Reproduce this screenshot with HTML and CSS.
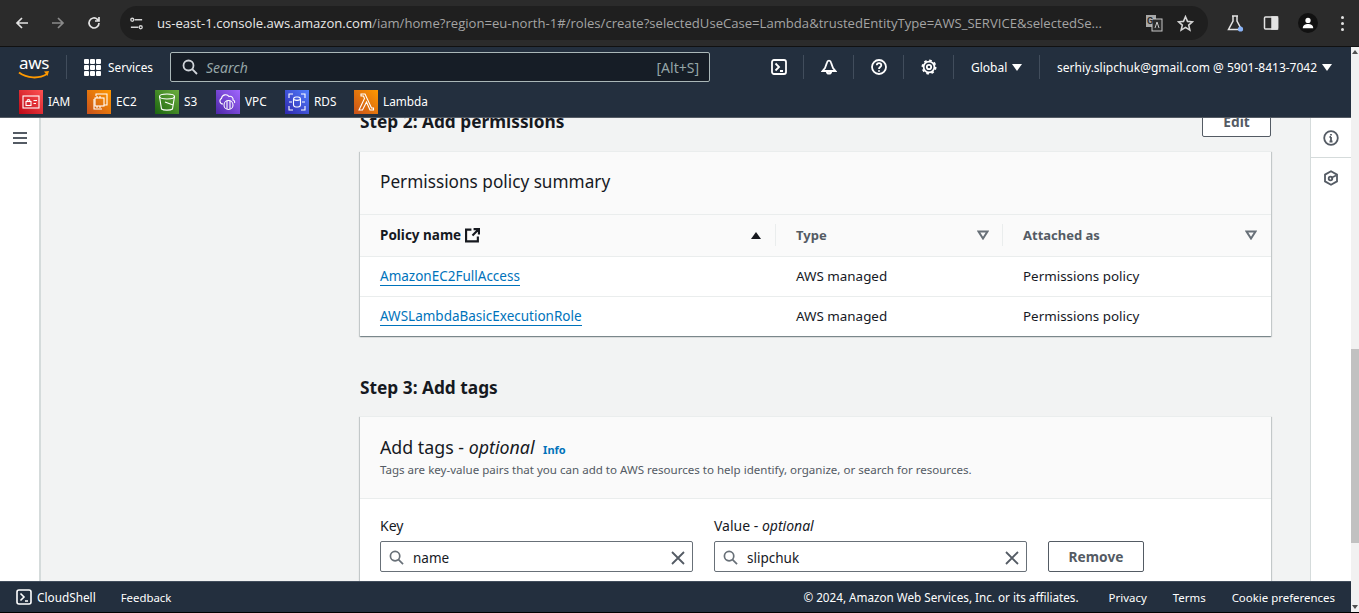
FILE: index.html
```html
<!DOCTYPE html>
<html lang="en">
<head>
    <meta charset="UTF-8">
    <meta name="viewport" content="width=device-width, initial-scale=1.0">
    <title>Create role - IAM</title>
    <link rel="stylesheet" href="styles.css">
</head>
<body>

<!-- Browser toolbar -->
<div class="browser-bar">
    <svg class="browser-icon back" viewBox="0 0 16 16"><path d="M14 8H3M8 3 3 8l5 5"/></svg>
    <svg class="browser-icon forward" viewBox="0 0 16 16"><path d="M2 8h11M8 3l5 5-5 5"/></svg>
    <svg class="browser-icon reload" viewBox="0 0 16 16"><path d="M13 8a5 5 0 1 1-1.6-3.7L13 6M13 2v4H9"/></svg>
    <div class="url-pill">
        <svg class="site-icon" viewBox="0 0 16 16"><path d="M6 4h8M2 12h8"/><circle cx="3.5" cy="4" r="1.6"/><circle cx="12.5" cy="12" r="1.6"/></svg>
        <div class="url-text"><span class="url-host">us-east-1.console.aws.amazon.com</span>/iam/home?region=eu-north-1#/roles/create?selectedUseCase=Lambda&amp;trustedEntityType=AWS_SERVICE&amp;selectedSe...</div>
        <svg class="translate-icon" viewBox="0 0 18 18"><rect x="1" y="1" width="10" height="12" fill="#a8a8a8"/><rect x="7" y="5" width="10" height="12" fill="#2b2b2b" stroke="#c7c7c7"/><text x="2" y="10" font-size="9" font-weight="700" fill="#2b2b2b">G</text><path d="M10 14l2-6 2 6" fill="none" stroke="#c7c7c7"/></svg>
        <svg class="star-icon" viewBox="0 0 16 16"><path d="M8 1.6 9.900 6l4.700.4-3.600 3.100 1.100 4.700L8 11.700l-4.100 2.500L5 9.500 1.400 6.400 6.100 6z"/></svg>
    </div>
    <svg class="flask-icon" viewBox="0 0 18 18"><path d="M6 2h6M7 2v5L2.500 15.500h13L11 7V2"/><circle cx="14.500" cy="15" r="2.600"/></svg>
    <svg class="panel-icon" viewBox="0 0 16 16"><rect x="1.500" y="2" width="13" height="12" rx="1"/><rect x="9" y="2" width="5.500" height="12"/></svg>
    <div class="avatar"><svg viewBox="0 0 16 16"><circle cx="8" cy="5" r="3"/><path d="M2 14c0-3.500 3-4.800 6-4.800s6 1.300 6 4.800z"/></svg></div>
    <div class="kebab"><i></i><i></i><i></i></div>
</div>

<div class="page-frame">
    <div class="page">
        <!-- Console header -->
        <header class="top-nav">
            <div class="nav-main">
                <div class="aws-logo">
                    <span class="aws-word">aws</span>
                    <svg viewBox="0 0 32 9"><path d="M1 1.500c8 6 20 6.500 28 1.500" fill="none" stroke="#f90" stroke-width="2"/><path d="M26 .5l5-.5-1.500 5z" fill="#f90"/></svg>
                </div>
                <div class="services-btn">
                    <div class="grid-icon"><i></i><i></i><i></i><i></i><i></i><i></i><i></i><i></i><i></i></div>
                    <span>Services</span>
                </div>
                <div class="search-box">
                    <svg viewBox="0 0 16 16"><circle cx="6.500" cy="6.500" r="5"/><path d="M10.200 10.200 15 15"/></svg>
                    <span class="search-text">Search</span>
                    <span class="search-key">[Alt+S]</span>
                </div>
                <div class="nav-icon first">
                    <svg viewBox="0 0 16 16"><rect x="1" y="1" width="14" height="14" rx="2"/><path d="M4.500 4.500 8 8l-3.500 3.500M9 12h3"/></svg>
                </div>
                <div class="nav-icon">
                    <svg viewBox="0 0 16 16"><path d="M6 3.500C6.500 1 9.500 1 10 3.500L12 9l2.500 3h-13L4 9z"/><path d="M5.800 12.500a2.200 2.200 0 0 0 4.400 0z"/></svg>
                </div>
                <div class="nav-icon">
                    <svg viewBox="0 0 16 16"><circle cx="8" cy="8" r="7"/><path d="M5.800 6.200C5.800 3.500 10.300 3.500 10.300 6.200 10.300 8 8 8 8 10"/><path d="M8 11.300v1.400"/></svg>
                </div>
                <div class="nav-icon">
                    <svg viewBox="0 0 16 16"><circle cx="8" cy="8" r="5.400"/><circle cx="8" cy="8" r="6.600" stroke-dasharray="2.600 2.580"/><circle cx="8" cy="8" r="2.200"/></svg>
                </div>
                <div class="nav-menu global">Global <b class="caret"></b></div>
                <div class="nav-menu account">serhiy.slipchuk@gmail.com @ 5901-8413-7042 <b class="caret"></b></div>
            </div>
            <div class="nav-shortcuts">
                <div class="shortcut sc-iam">
                    <span class="tile tile-red"><svg viewBox="0 0 24 24"><rect x="4" y="6" width="16" height="12"/><rect x="7" y="11.500" width="5" height="4"/><path d="M8 11.500c0-2.500 3-2.500 3 0M14.500 10.500H18M14.500 13.500H17"/></svg></span><span>IAM</span>
                </div>
                <div class="shortcut sc-ec2">
                    <span class="tile tile-orange"><svg viewBox="0 0 24 24"><path d="M9 6V4h11v11h-3M7 9v10h8"/><rect x="8" y="8" width="9" height="8"/><path d="M10 6v2M13 6v2M10 16v2M13 16v2"/></svg></span><span>EC2</span>
                </div>
                <div class="shortcut sc-s3">
                    <span class="tile tile-green"><svg viewBox="0 0 24 24"><ellipse cx="12" cy="6.500" rx="7.500" ry="2.500"/><path d="M4.500 6.500 6.500 19c2 1.500 9 1.500 11 0l2-12.500M10 12l8 3"/></svg></span><span>S3</span>
                </div>
                <div class="shortcut sc-vpc">
                    <span class="tile tile-purple"><svg viewBox="0 0 24 24"><path d="M7 14c-3.500 0-4-4.500-1.500-5.500.5-4 5.500-5 7.500-2 2.500-.8 4.500 1.200 4 3.500 1.500.3 2 2 1.500 3"/><circle cx="12.500" cy="15" r="4.500"/><path d="M11 11v8M14 11v8"/></svg></span><span>VPC</span>
                </div>
                <div class="shortcut sc-rds">
                    <span class="tile tile-blue"><svg viewBox="0 0 24 24"><path d="M4 8V4h4M16 4h4v4M4 16v4h4M20 16v4h-4M4 12h3M17 12h3"/><rect x="8.500" y="7" width="7" height="10" rx="2.500"/><path d="M8.500 9.500c2 1 5 1 7 0"/></svg></span><span>RDS</span>
                </div>
                <div class="shortcut">
                    <span class="tile tile-orange"><svg viewBox="0 0 24 24"><path d="M5 20h3.500l4-8 3.500 8h3.500v-2h-2L11 4H7v2h2.500l1 2.500z"/></svg></span><span>Lambda</span>
                </div>
            </div>
        </header>

        <div class="workspace">
            <aside class="side-nav">
                <div class="burger"><i></i><i></i><i></i></div>
            </aside>

            <main class="main">
                <div class="content">
                    <div class="step-head">
                        <h2>Step 2: Add permissions</h2>
                        <button class="btn edit-btn" type="button">Edit</button>
                    </div>

                    <!-- Permissions table -->
                    <section class="card">
                        <div class="card-head perm-head">
                            <h3>Permissions policy summary</h3>
                        </div>
                        <table class="policy-table">
                            <thead>
                                <tr>
                                    <th class="col-name">
                                        <div class="th-inner sorted">
                                            <span class="th-label">Policy name
                                                <svg class="ext-icon" viewBox="0 0 14 14"><path d="M6 1.500H1v11h11V8M7 7l5.500-5.500M8 1h5v5"/></svg>
                                            </span>
                                            <b class="sort-up"></b>
                                        </div>
                                    </th>
                                    <th class="col-type">
                                        <div class="th-inner">
                                            <span>Type</span>
                                            <svg class="sort-down" viewBox="0 0 12 10"><path d="M1.500 1.500h9L6 8.500z"/></svg>
                                        </div>
                                    </th>
                                    <th>
                                        <div class="th-inner">
                                            <span>Attached as</span>
                                            <svg class="sort-down" viewBox="0 0 12 10"><path d="M1.500 1.500h9L6 8.500z"/></svg>
                                        </div>
                                    </th>
                                </tr>
                            </thead>
                            <tbody>
                                <tr>
                                    <td class="cell-name"><a href="#">AmazonEC2FullAccess</a></td>
                                    <td class="cell-pad">AWS managed</td>
                                    <td class="cell-pad">Permissions policy</td>
                                </tr>
                                <tr>
                                    <td class="cell-name"><a href="#">AWSLambdaBasicExecutionRole</a></td>
                                    <td class="cell-pad">AWS managed</td>
                                    <td class="cell-pad">Permissions policy</td>
                                </tr>
                            </tbody>
                        </table>
                    </section>

                    <h2 class="step-three">Step 3: Add tags</h2>

                    <!-- Tags form -->
                    <section class="card">
                        <div class="card-head tags-head">
                            <h3>Add tags - <em>optional</em> <a class="info-link" href="#">Info</a></h3>
                            <p>Tags are key-value pairs that you can add to AWS resources to help identify, organize, or search for resources.</p>
                        </div>
                        <div class="tag-row">
                            <div class="field">
                                <label>Key</label>
                                <div class="tag-input">
                                    <svg class="input-search" viewBox="0 0 16 16"><circle cx="6.500" cy="6.500" r="5"/><path d="M10.200 10.200 15 15"/></svg>
                                    <span>name</span>
                                    <svg class="input-clear" viewBox="0 0 14 14"><path d="M1 1l12 12M13 1 1 13"/></svg>
                                </div>
                            </div>
                            <div class="field">
                                <label>Value - <em>optional</em></label>
                                <div class="tag-input">
                                    <svg class="input-search" viewBox="0 0 16 16"><circle cx="6.500" cy="6.500" r="5"/><path d="M10.200 10.200 15 15"/></svg>
                                    <span>slipchuk</span>
                                    <svg class="input-clear" viewBox="0 0 14 14"><path d="M1 1l12 12M13 1 1 13"/></svg>
                                </div>
                            </div>
                            <button class="btn remove-btn" type="button">Remove</button>
                        </div>
                    </section>
                </div>
            </main>

            <aside class="right-rail">
                <div class="rail-item">
                    <svg viewBox="0 0 16 16"><circle cx="8" cy="8" r="6.800"/><path d="M8 7v4.500M6.500 7H8M6.500 11.500h3M8 4v1.500"/></svg>
                </div>
                <div class="rail-item">
                    <svg viewBox="0 0 16 16"><path d="M8 1.200 14 4.600v6.800L8 14.800 2 11.400V4.600z"/><circle cx="7.500" cy="8.500" r="1.800"/><path d="M8 8l5-2.500"/></svg>
                </div>
            </aside>
        </div>

        <footer class="footer">
            <div class="footer-shell">
                <svg viewBox="0 0 16 16"><rect x="1" y="1" width="14" height="14" rx="2"/><path d="M4.500 4.500 8 8l-3.500 3.500M9 12h3"/></svg>
                <span>CloudShell</span>
            </div>
            <span class="footer-feedback">Feedback</span>
            <span class="footer-copy">© 2024, Amazon Web Services, Inc. or its affiliates.</span>
            <span class="footer-link">Privacy</span>
            <span class="footer-link">Terms</span>
            <span class="footer-link">Cookie preferences</span>
        </footer>
    </div>

    <!-- Page scrollbar -->
    <div class="scrollbar">
        <b class="arrow-up"></b>
        <div class="scroll-track"><div class="scroll-thumb"></div></div>
        <b class="arrow-down"></b>
    </div>
</div>

</body>
</html>
```

FILE: styles.css
```css
* {
    box-sizing: border-box;
}

html, body {
    margin: 0;
    height: 100%;
    overflow: hidden;
}

body {
    display: flex;
    flex-direction: column;
    font-family: 'Noto Sans', sans-serif;
    font-size: 14px;
    color: #16191f;
    background-color: #000;
}

svg {
    display: block;
    flex-shrink: 0;
}

/* Browser toolbar */
.browser-bar {
    height: 47px;
    flex-shrink: 0;
    display: flex;
    align-items: center;
    background-color: #2b2b2b;
    border-bottom: 1px solid #111;
    padding-left: 14px;
    font-family: 'Roboto', sans-serif;
}

.browser-icon {
    width: 16px;
    height: 16px;
    fill: none;
    stroke: #e3e3e3;
    stroke-width: 1.7;
}

.forward {
    margin-left: 20px;
    stroke: #8a8a8a;
}

.reload {
    margin-left: 20px;
}

.url-pill {
    width: 1088px;
    height: 34px;
    margin-left: 18px;
    display: flex;
    align-items: center;
    background-color: #1f1f1f;
    border-radius: 17px;
    padding-left: 9px;
}

.site-icon {
    width: 15px;
    height: 15px;
    fill: none;
    stroke: #d5d5d5;
    stroke-width: 1.4;
}

.url-text {
    width: 982px;
    margin-left: 13px;
    white-space: nowrap;
    font-family: 'Open Sans', sans-serif;
    font-size: 13.1px;
    color: #a4a4a4;
}

.url-host {
    color: #e8e8e8;
}

.translate-icon {
    width: 18px;
    height: 18px;
    margin-left: 6px;
}

.star-icon {
    width: 17px;
    height: 17px;
    margin-left: 14px;
    fill: none;
    stroke: #d5d5d5;
    stroke-width: 1.5;
}

.flask-icon {
    width: 18px;
    height: 18px;
    margin-left: 18px;
    fill: none;
    stroke: #e3e3e3;
    stroke-width: 1.5;
}

.flask-icon circle {
    fill: #8ab4f8;
    stroke: none;
}

.panel-icon {
    width: 16px;
    height: 16px;
    margin-left: 19px;
    fill: none;
    stroke: #e3e3e3;
    stroke-width: 1.5;
}

.panel-icon rect + rect {
    fill: #e3e3e3;
}

.avatar {
    width: 20px;
    height: 20px;
    margin-left: 19px;
    border-radius: 50%;
    background-color: #111;
    padding: 3px;
}

.avatar svg {
    width: 14px;
    height: 14px;
    fill: #fff;
}

.kebab {
    margin-left: 23px;
    display: flex;
    flex-direction: column;
    gap: 3px;
}

.kebab i {
    width: 3px;
    height: 3px;
    border-radius: 50%;
    background-color: #e3e3e3;
}

/* Page frame, scrollbar sits right of it */
.page-frame {
    flex: 1;
    display: flex;
    min-height: 0;
    padding-bottom: 1px;
}

.page {
    flex: 1;
    display: flex;
    flex-direction: column;
    min-width: 0;
}

.scrollbar {
    width: 8px;
    display: flex;
    flex-direction: column;
    align-items: center;
    background-color: #f1f1f1;
}

.scroll-track {
    flex: 1;
    width: 100%;
    padding-top: 292px;
}

.scroll-thumb {
    height: 194px;
    background-color: #c1c1c1;
}

.arrow-up, .arrow-down {
    width: 0;
    height: 0;
    margin: 3px 0;
    border-left: 3px solid transparent;
    border-right: 3px solid transparent;
}

.arrow-up {
    border-bottom: 4px solid #505050;
}

.arrow-down {
    border-top: 4px solid #505050;
}

/* Console header */
.top-nav {
    height: 71px;
    flex-shrink: 0;
    background-color: #232f3e;
    border-bottom: 1px solid #545b64;
    color: #fff;
    font-size: 12px;
}

.nav-main {
    height: 40px;
    display: flex;
    align-items: center;
    padding-left: 18px;
}

.aws-logo {
    width: 32px;
    height: 26px;
}

.aws-word {
    display: block;
    font-size: 17px;
    line-height: 17px;
    letter-spacing: -0.3px;
    text-align: center;
}

.aws-logo svg {
    width: 32px;
    height: 9px;
}

.services-btn {
    display: flex;
    align-items: center;
    gap: 7px;
    height: 24px;
    margin-left: 16px;
    padding-left: 17px;
    border-left: 1px solid #414d5c;
    font-size: 11.8px;
}

.grid-icon {
    display: grid;
    grid-template-columns: repeat(3, 5px);
    gap: 1px;
}

.grid-icon i {
    height: 5px;
    background-color: #fff;
    border-radius: 1px;
}

.search-box {
    width: 540px;
    height: 30px;
    margin-left: 17px;
    display: flex;
    align-items: center;
    background-color: #161d26;
    border: 1px solid #aab7b8;
    border-radius: 2px;
    padding: 0 10px 0 11px;
    font-size: 14px;
}

.search-box svg {
    width: 16px;
    height: 16px;
    fill: none;
    stroke: #d1d5db;
    stroke-width: 1.8;
}

.search-text {
    margin-left: 8px;
    font-style: italic;
    color: #95a5a6;
}

.search-key {
    margin-left: auto;
    color: #95a5a6;
}

.nav-icon {
    width: 50px;
    height: 24px;
    display: flex;
    align-items: center;
    justify-content: center;
    border-right: 1px solid #414d5c;
}

.nav-icon.first {
    margin-left: 44px;
}

.nav-icon svg {
    width: 16px;
    height: 16px;
    fill: none;
    stroke: #fff;
    stroke-width: 1.8;
}

.nav-menu {
    height: 24px;
    display: flex;
    align-items: center;
    white-space: nowrap;
}

.global {
    width: 86px;
    padding-left: 17px;
    border-right: 1px solid #414d5c;
}

.account {
    padding-left: 17px;
}

.caret {
    margin-left: 5px;
    border-left: 5px solid transparent;
    border-right: 5px solid transparent;
    border-top: 7px solid #fff;
}

.nav-shortcuts {
    display: flex;
    align-items: center;
    height: 30px;
    padding-left: 19px;
}

.shortcut {
    display: flex;
    align-items: center;
    gap: 5px;
    font-size: 11.8px;
    line-height: 14px;
}

.shortcut span + span {
    padding-bottom: 2px;
}

.sc-iam, .sc-ec2 {
    width: 68px;
}

.sc-s3 {
    width: 61px;
}

.sc-vpc, .sc-rds {
    width: 69px;
}

.tile {
    width: 24px;
    height: 24px;
}

.tile svg {
    width: 24px;
    height: 24px;
    fill: none;
    stroke: #fff;
    stroke-width: 1.1;
}

.tile-red { background: linear-gradient(45deg, #bd0816, #ff5252); }
.tile-orange { background: linear-gradient(45deg, #c8511b, #f90); }
.tile-green { background: linear-gradient(45deg, #1b660f, #6cae3e); }
.tile-purple { background: linear-gradient(45deg, #4d27a8, #a166ff); }
.tile-blue { background: linear-gradient(45deg, #2e27ad, #527fff); }

/* Main layout */
.workspace {
    flex: 1;
    min-height: 0;
    display: flex;
    background-color: #f2f3f3;
}

.side-nav {
    width: 41px;
    background-color: #fff;
    border-right: 2px solid #d5dbdb;
    padding: 14px 0 0 13px;
}

.burger {
    display: flex;
    flex-direction: column;
    gap: 3px;
}

.burger i {
    width: 14px;
    height: 2px;
    background-color: #545b64;
}

.main {
    flex: 1;
    min-width: 0;
    overflow: hidden;
    padding: 0 39px 0 319px;
}

.content {
    margin-top: -13px;
}

.step-head {
    display: flex;
    align-items: center;
    justify-content: space-between;
    height: 32px;
    margin-bottom: 14px;
}

h2 {
    margin: 0;
    font-size: 17.3px;
    line-height: 22px;
    font-weight: 700;
}

.step-head h2 {
    margin-top: 2px;
}

.step-three {
    margin: 41px 0 17px;
}

.btn {
    background-color: #fff;
    border: 1px solid #545b64;
    border-radius: 2px;
    color: #545b64;
    font-family: inherit;
    font-size: 13.7px;
    font-weight: 700;
}

.edit-btn {
    width: 69px;
    height: 32px;
}

.remove-btn {
    width: 96px;
    height: 31px;
    margin-left: 21px;
}

/* Cards */
.card {
    background-color: #fff;
    box-shadow: 0 1px 1px 0 rgba(0, 28, 36, 0.3), 1px 1px 1px 0 rgba(0, 28, 36, 0.15), -1px 1px 1px 0 rgba(0, 28, 36, 0.15);
    border-top: 1px solid #eaeded;
}

.card-head {
    background-color: #fafafa;
    border-bottom: 1px solid #eaeded;
    padding: 0 20px;
}

.perm-head {
    height: 63px;
    padding-top: 18px;
}

.card-head h3 {
    margin: 0;
    font-size: 17.8px;
    line-height: 24px;
    font-weight: 400;
}

.perm-head h3 {
    font-size: 17.2px;
}

.tags-head {
    height: 82px;
    padding-top: 18px;
}

.card-head p {
    margin: 0;
    font-size: 11.55px;
    line-height: 16px;
    color: #545b64;
}

.info-link {
    margin-left: 4px;
    font-size: 11px;
    font-weight: 700;
    color: #0073bb;
    text-decoration: none;
}

/* Policy table */
.policy-table {
    width: 100%;
    border-collapse: collapse;
    table-layout: fixed;
}

.policy-table th {
    height: 41px;
    padding: 0 14px 0 0;
    background-color: #fafafa;
    border-bottom: 1px solid #eaeded;
    font-size: 13px;
    text-align: left;
    color: #545b64;
}

.col-name {
    width: 415px;
}

.col-type {
    width: 227px;
}

.policy-table th.col-type {
    padding-right: 13px;
}

.th-inner {
    display: flex;
    align-items: center;
    justify-content: space-between;
    height: 22px;
    padding-left: 20px;
    border-left: 1px solid #eaeded;
}

.th-inner.sorted {
    border-left: none;
    color: #16191f;
    font-size: 13.5px;
}

.th-label {
    display: flex;
    align-items: center;
    gap: 4px;
}

.ext-icon {
    width: 15px;
    height: 15px;
    fill: none;
    stroke: #16191f;
    stroke-width: 2;
}

.sort-up {
    border-left: 5px solid transparent;
    border-right: 5px solid transparent;
    border-bottom: 7px solid #16191f;
}

.sort-down {
    width: 12px;
    height: 10px;
    fill: none;
    stroke: #687078;
    stroke-width: 2;
}

.policy-table td {
    height: 40px;
    border-bottom: 1px solid #eaeded;
    font-size: 13.4px;
    padding: 0 0 0 21px;
}

.policy-table tr:last-child td {
    border-bottom: none;
}

.policy-table td.cell-name {
    padding-left: 20px;
    font-size: 13.5px;
}

.cell-name a {
    color: #0073bb;
    text-decoration: none;
    border-bottom: 1px solid #0073bb;
}

/* Tag editor */
.tag-row {
    display: flex;
    align-items: flex-end;
    padding: 18px 20px 20px;
}

.field {
    width: 313px;
    margin-right: 21px;
}

.field:nth-child(2) {
    margin-right: 0;
}

.field label {
    display: block;
    margin-bottom: 7px;
    font-size: 14px;
    line-height: 17px;
}

.tag-input {
    height: 31px;
    display: flex;
    align-items: center;
    border: 1px solid #687078;
    border-radius: 2px;
    padding: 2px 7px 0 8px;
    font-size: 13.5px;
}

.input-search {
    width: 15px;
    height: 15px;
    margin-right: 9px;
    fill: none;
    stroke: #687078;
    stroke-width: 1.8;
}

.input-clear {
    width: 14px;
    height: 14px;
    margin-left: auto;
    fill: none;
    stroke: #545b64;
    stroke-width: 1.8;
}

/* Help rail */
.right-rail {
    width: 41px;
    background-color: #fff;
    border-left: 1px solid #d5dbdb;
}

.rail-item {
    height: 40px;
    display: flex;
    align-items: center;
    justify-content: center;
}

.rail-item:first-child {
    border-bottom: 1px solid #d5dbdb;
}

.rail-item svg {
    width: 16px;
    height: 16px;
    fill: none;
    stroke: #545b64;
    stroke-width: 1.8;
}

/* Footer */
.footer {
    height: 31px;
    flex-shrink: 0;
    display: flex;
    align-items: center;
    background-color: #232f3e;
    border-top: 1px solid #414d5c;
    color: #fff;
    font-size: 11.45px;
    padding: 0 16px;
}

.footer-shell {
    display: flex;
    align-items: center;
    gap: 5px;
    font-size: 11.8px;
}

.footer-shell svg {
    width: 16px;
    height: 16px;
    fill: none;
    stroke: #fff;
    stroke-width: 1.6;
}

.footer-feedback {
    margin-left: 25px;
    font-size: 11.4px;
}

.footer-copy {
    margin-left: auto;
    margin-right: 4px;
    font-size: 11.7px;
}

.footer-link {
    margin-left: 26px;
}
```
